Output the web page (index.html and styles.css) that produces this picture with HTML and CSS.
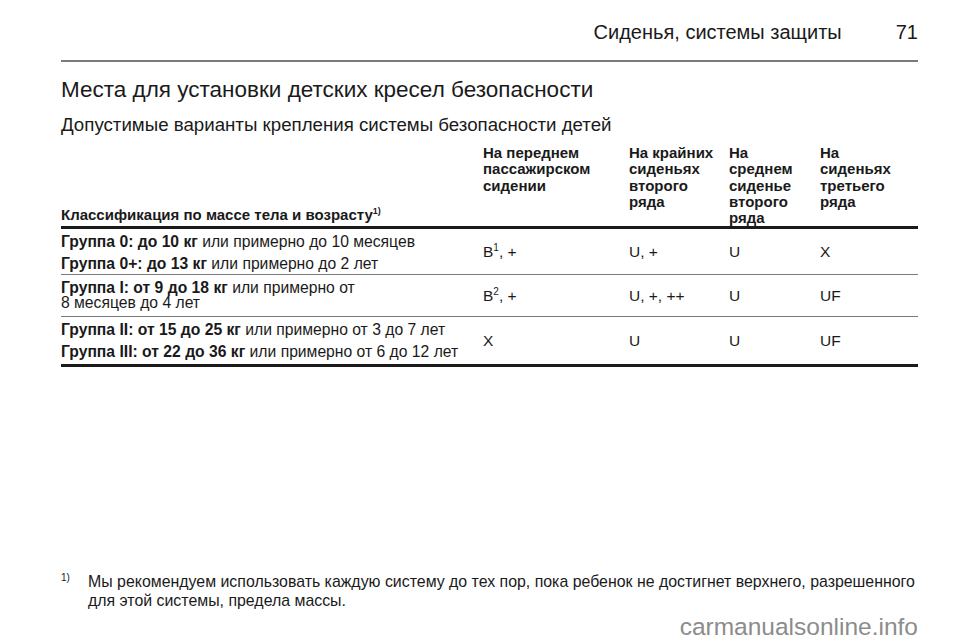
FILE: index.html
```html
<!DOCTYPE html>
<html lang="ru">
<head>
<meta charset="utf-8">
<title>Сиденья, системы защиты</title>
<link rel="stylesheet" href="styles.css">
</head>
<body>
<div class="page">
  <header class="running-head">
    <span class="section">Сиденья, системы защиты</span>
    <span class="pageno">71</span>
  </header>
  <h1 class="title">Места для установки детских кресел безопасности</h1>
  <h2 class="subtitle">Допустимые варианты крепления системы безопасности детей</h2>
  <table class="seats">
    <colgroup>
      <col class="c1"><col class="c2"><col class="c3"><col class="c4"><col class="c5">
    </colgroup>
    <thead>
      <tr>
        <th>Классификация по массе тела и возрасту<sup>1)</sup></th>
        <th class="top">На переднем<br>пассажирском<br>сидении</th>
        <th class="top">На крайних<br>сиденьях<br>второго<br>ряда</th>
        <th class="top">На<br>среднем<br>сиденье<br>второго<br>ряда</th>
        <th class="top">На<br>сиденьях<br>третьего<br>ряда</th>
      </tr>
    </thead>
    <tbody>
      <tr class="r1">
        <td class="grp"><p><b>Группа 0: до 10 кг</b> или примерно до 10 месяцев</p><p><b>Группа 0+: до 13 кг</b> или примерно до 2 лет</p></td>
        <td>B<sup>1</sup>, +</td>
        <td>U, +</td>
        <td>U</td>
        <td>X</td>
      </tr>
      <tr class="r2">
        <td class="grp"><p><b>Группа I: от 9 до 18 кг</b> или примерно от<br>8 месяцев до 4 лет</p></td>
        <td>B<sup>2</sup>, +</td>
        <td>U, +, ++</td>
        <td>U</td>
        <td>UF</td>
      </tr>
      <tr class="r3">
        <td class="grp"><p><b>Группа II: от 15 до 25 кг</b> или примерно от 3 до 7 лет</p><p><b>Группа III: от 22 до 36 кг</b> или примерно от 6 до 12 лет</p></td>
        <td>X</td>
        <td>U</td>
        <td>U</td>
        <td>UF</td>
      </tr>
    </tbody>
  </table>
  <div class="footnote">
    <span class="fn-mark">1)</span>
    <p class="fn-text">Мы рекомендуем использовать каждую систему до тех пор, пока ребенок не достигнет верхнего, разрешенного для этой системы, предела массы.</p>
  </div>
  <div class="watermark">carmanualsonline.info</div>
</div>
</body>
</html>
```
FILE: styles.css
```css
html, body {
  margin: 0;
  padding: 0;
  background: #ffffff;
}
body {
  font-family: "Liberation Sans", Arial, sans-serif;
  color: #1a1a1a;
}
.page {
  width: 857px;
  height: 642px;
  padding-left: 61px;
  display: flex;
  flex-direction: column;
  box-sizing: content-box;
}
.running-head {
  display: flex;
  justify-content: flex-end;
  align-items: baseline;
  gap: 54px;
  font-size: 20px;
  padding-top: 21px;
  height: 39px;
  border-bottom: 2px solid #7a7a7a;
  box-sizing: content-box;
}
.title {
  margin: 15px 0 0;
  font-size: 22.5px;
  font-weight: normal;
  line-height: 26px;
}
.subtitle {
  margin: 11px 0 0;
  font-size: 18.7px;
  font-weight: normal;
  line-height: 21px;
}
.seats {
  border-collapse: collapse;
  width: 857px;
  margin-top: 10px;
  font-size: 15.7px;
  table-layout: fixed;
}
.c1 { width: 422px; }
.c2 { width: 146px; }
.c3 { width: 100px; }
.c4 { width: 91px; }
.c5 { width: 98px; }
.seats th {
  text-align: left;
  vertical-align: bottom;
  font-size: 15px;
  line-height: 16.25px;
  font-weight: bold;
  padding: 0 0 3px 0;
  border-bottom: 3px solid #1a1a1a;
  white-space: nowrap;
}
.seats th.top {
  vertical-align: top;
  padding-bottom: 0;
}
.seats th sup {
  font-size: 9px;
  line-height: 0;
}
.seats td {
  padding: 0;
  vertical-align: middle;
  line-height: 14.5px;
  font-size: 15.5px;
  border-bottom: 1px solid #7a7a7a;
}
.seats tbody tr:last-child td {
  border-bottom: 3px solid #1a1a1a;
}
.seats td sup {
  font-size: 10px;
  line-height: 0;
}
.seats td.grp {
  font-size: 15.7px;
  padding: 6px 0 3px;
}
.grp p {
  margin: 0;
}
.grp p + p {
  margin-top: 7px;
}
.r2 td.grp {
  padding: 6px 0 6px;
}
.r3 td.grp {
  padding: 6px 0 5px;
}
.footnote {
  margin-top: auto;
  display: flex;
  font-size: 15.9px;
  line-height: 19px;
}
.fn-mark {
  font-size: 10px;
  line-height: 12px;
  width: 27px;
  flex: none;
}
.fn-text {
  margin: 0;
}
.watermark {
  text-align: right;
  font-size: 24.5px;
  line-height: 30px;
  color: #8c8c8c;
  margin-top: 2px;
}
```
